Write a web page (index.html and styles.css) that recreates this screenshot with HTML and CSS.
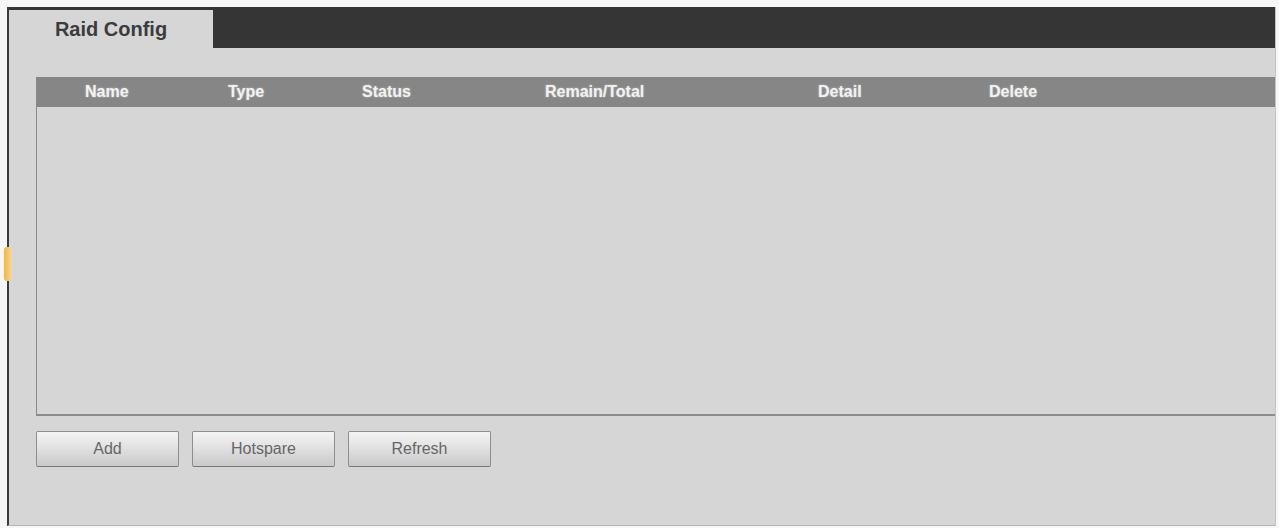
FILE: index.html
```html
<!DOCTYPE html>
<html>
<head>
    <title>Raid Config</title>
    <meta charset="UTF-8">
    <meta name="viewport" content="width=device-width, initial-scale=1.0">
    <link rel="stylesheet" href="styles.css">
</head>
<body>
    <div class="frame">
        <div class="tabbar">
            <div class="tab">Raid Config</div>
        </div>
        <div class="content">
            <div class="grid">
                <div class="grid-head">
                    <span class="col col-name">Name</span>
                    <span class="col col-type">Type</span>
                    <span class="col col-status">Status</span>
                    <span class="col col-remain">Remain/Total</span>
                    <span class="col col-detail">Detail</span>
                    <span class="col col-delete">Delete</span>
                </div>
                <div class="grid-body"></div>
            </div>
            <div class="buttons">
                <button class="btn">Add</button>
                <button class="btn">Hotspare</button>
                <button class="btn">Refresh</button>
            </div>
        </div>
    </div>
    <div class="handle"></div>
</body>
</html>
```

FILE: styles.css
```css
body {
    margin: 0;
    background: #f7f7f7;
    font-family: 'Liberation Sans', Arial, sans-serif;
    position: relative;
    height: 528px;
    overflow: hidden;
}
.frame {
    margin: 7px 0 0 7px;
    width: 1266px;
    background: #d6d6d6;
    border-left: 2px solid #3a3a3a;
    border-bottom: 1px solid #b5b5b5;
    border-right: 1px solid #c4c4c4;
}
.tabbar {
    height: 38px;
    padding-top: 3px;
    background: #353535;
    display: flex;
}
.tab {
    width: 204px;
    height: 33px;
    padding-top: 5px;
    background: #d6d6d6;
    color: #3c3c3c;
    font-size: 20px;
    font-weight: bold;
    text-align: center;
    line-height: 28px;
}
.content {
    padding: 29px 0 58px 27px;
}
.grid {
    border-left: 1px solid #8a8a8a;
    border-bottom: 2px solid #8c8c8c;
}
.grid-head {
    display: flex;
    height: 30px;
    align-items: center;
    background: #868686;
    color: #f2f2f2;
    font-size: 16px;
    font-weight: bold;
    text-shadow: 0 0 2px rgba(255, 255, 255, 0.5);
}
.col { display: block; }
.col-name { width: 143px; padding-left: 48px; }
.col-type { width: 134px; }
.col-status { width: 183px; }
.col-remain { width: 273px; }
.col-detail { width: 171px; }
.col-delete { flex: 1; }
.grid-body {
    height: 307px;
    background: #d6d6d6;
}
.buttons {
    display: flex;
    gap: 13px;
    margin-top: 15px;
}
.btn {
    width: 143px;
    height: 36px;
    padding: 0;
    font-family: 'Liberation Sans', Arial, sans-serif;
    font-size: 16px;
    color: #666;
    background: linear-gradient(to bottom, #f4f4f4 0%, #e2e2e2 45%, #c9c9c9 100%);
    border: 1px solid #8e8e8e;
    border-bottom-color: #777;
    border-radius: 2px;
    cursor: pointer;
}
.handle {
    position: absolute;
    left: 4px;
    top: 247px;
    width: 8px;
    height: 34px;
    border-radius: 3px;
    background: linear-gradient(to right, #f0b44c, #f9d98e);
}
```
